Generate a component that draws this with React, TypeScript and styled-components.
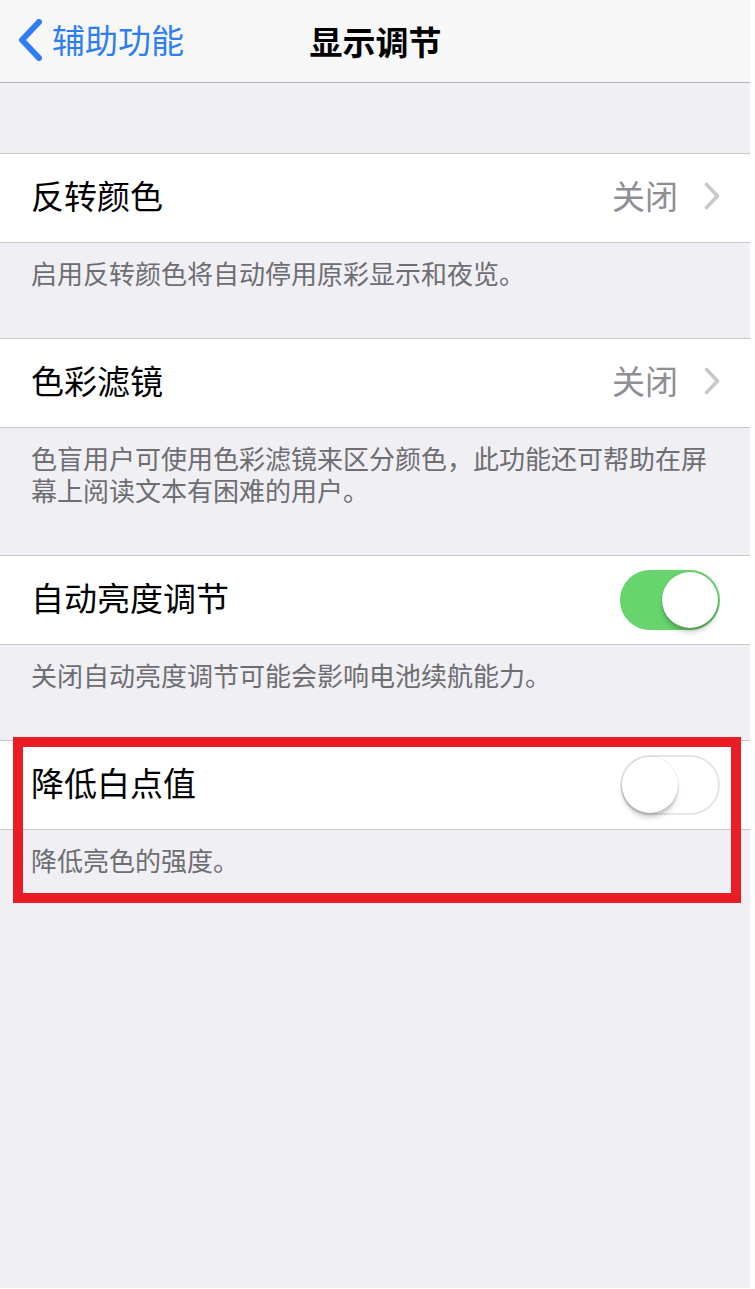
import React from "react";
import styled, { createGlobalStyle } from "styled-components";

const GlobalStyle = createGlobalStyle`
  html, body {
    margin: 0;
    padding: 0;
    background: #ffffff;
  }
  body {
    font-family: "Noto Sans CJK SC", "Noto Sans", sans-serif;
    -webkit-font-smoothing: antialiased;
  }
`;

const Screen = styled.div`
  width: 750px;
  min-height: 1288px;
  background: #efeff4;
  display: flex;
  flex-direction: column;
`;

const NavBar = styled.header`
  height: 82px;
  background: #f7f7f8;
  border-bottom: 1px solid #b4b4b8;
  display: grid;
  grid-template-columns: 1fr auto 1fr;
  align-items: center;
  padding: 0 16px 0 17px;
`;

const BackButton = styled.div`
  display: flex;
  align-items: center;
  gap: 9px;
  color: #2f7df6;
  font-size: 33px;
  line-height: 1;
  margin-top: -3px;
`;

const Title = styled.h1`
  margin: 0;
  font-size: 33px;
  font-weight: 700;
  color: #000000;
  line-height: 1;
`;

const Spacer = styled.div`
  height: 70px;
`;

const Section = styled.section`
  position: relative;
  display: flex;
  flex-direction: column;
`;

const Group = styled.div`
  background: #ffffff;
  border-top: 1px solid #c8c7cc;
  border-bottom: 1px solid #c8c7cc;
`;

const Row = styled.div`
  height: 88px;
  display: flex;
  align-items: center;
  justify-content: space-between;
  padding: 0 30px 0 31px;
`;

const Label = styled.span`
  font-size: 33px;
  color: #000000;
  line-height: 1;
  margin-bottom: 5px;
`;

const Detail = styled.span`
  display: flex;
  align-items: center;
  gap: 26px;
  font-size: 33px;
  color: #8e8e93;
  line-height: 1;
  margin-bottom: 5px;
`;

const Footer = styled.p<{ $lines?: number }>`
  margin: 0;
  padding: 14px 40px 0 31px;
  height: ${(p) => 95 + ((p.$lines ?? 1) - 1) * 32 - 14}px;
  font-size: 26px;
  line-height: 32px;
  color: #6d6d72;
`;

const SwitchTrack = styled.div<{ $on: boolean }>`
  position: relative;
  width: 100px;
  height: 60px;
  border-radius: 30px;
  box-sizing: border-box;
  background: ${(p) => (p.$on ? "#68d46e" : "#ffffff")};
  border: 2px solid ${(p) => (p.$on ? "#68d46e" : "#e6e6ea")};
`;

const SwitchKnob = styled.div<{ $on: boolean }>`
  position: absolute;
  top: 0;
  left: ${(p) => (p.$on ? "40px" : "0px")};
  width: 56px;
  height: 56px;
  border-radius: 50%;
  background: #ffffff;
  box-shadow: 0 6px 4px rgba(0, 0, 0, 0.12), 0 3px 2px rgba(0, 0, 0, 0.1),
    0 0 0 1px rgba(0, 0, 0, 0.06);
`;

const Highlight = styled.div`
  position: absolute;
  top: -3px;
  left: 13px;
  width: 728px;
  height: 166px;
  box-sizing: border-box;
  border: 10px solid #ea1d26;
  pointer-events: none;
`;

const BackChevron = () => (
  <svg width="26" height="42" viewBox="0 0 26 42" fill="none">
    <path
      d="M22 3 L5 21 L22 39"
      stroke="#2f7df6"
      strokeWidth="6"
      strokeLinecap="round"
      strokeLinejoin="round"
    />
  </svg>
);

const DisclosureChevron = () => (
  <svg width="16" height="28" viewBox="0 0 16 28" fill="none">
    <path
      d="M2.5 2.5 L13.5 14 L2.5 25.5"
      stroke="#c7c7cc"
      strokeWidth="3.6"
      strokeLinecap="round"
      strokeLinejoin="round"
    />
  </svg>
);

const Switch = ({ on }: { on: boolean }) => (
  <SwitchTrack $on={on}>
    <SwitchKnob $on={on} />
  </SwitchTrack>
);

export default function App() {
  return (
    <>
      <GlobalStyle />
      <Screen>
        <NavBar>
          <BackButton>
            <BackChevron />
            <span>辅助功能</span>
          </BackButton>
          <Title>显示调节</Title>
          <div />
        </NavBar>

        <Spacer />

        <Section>
          <Group>
            <Row>
              <Label>反转颜色</Label>
              <Detail>
                关闭
                <DisclosureChevron />
              </Detail>
            </Row>
          </Group>
          <Footer>启用反转颜色将自动停用原彩显示和夜览。</Footer>
        </Section>

        <Section>
          <Group>
            <Row>
              <Label>色彩滤镜</Label>
              <Detail>
                关闭
                <DisclosureChevron />
              </Detail>
            </Row>
          </Group>
          <Footer $lines={2}>
            色盲用户可使用色彩滤镜来区分颜色，此功能还可帮助在屏幕上阅读文本有困难的用户。
          </Footer>
        </Section>

        <Section>
          <Group>
            <Row>
              <Label>自动亮度调节</Label>
              <Switch on />
            </Row>
          </Group>
          <Footer>关闭自动亮度调节可能会影响电池续航能力。</Footer>
        </Section>

        <Section>
          <Group>
            <Row>
              <Label>降低白点值</Label>
              <Switch on={false} />
            </Row>
          </Group>
          <Footer>降低亮色的强度。</Footer>
          <Highlight />
        </Section>
      </Screen>
    </>
  );
}
